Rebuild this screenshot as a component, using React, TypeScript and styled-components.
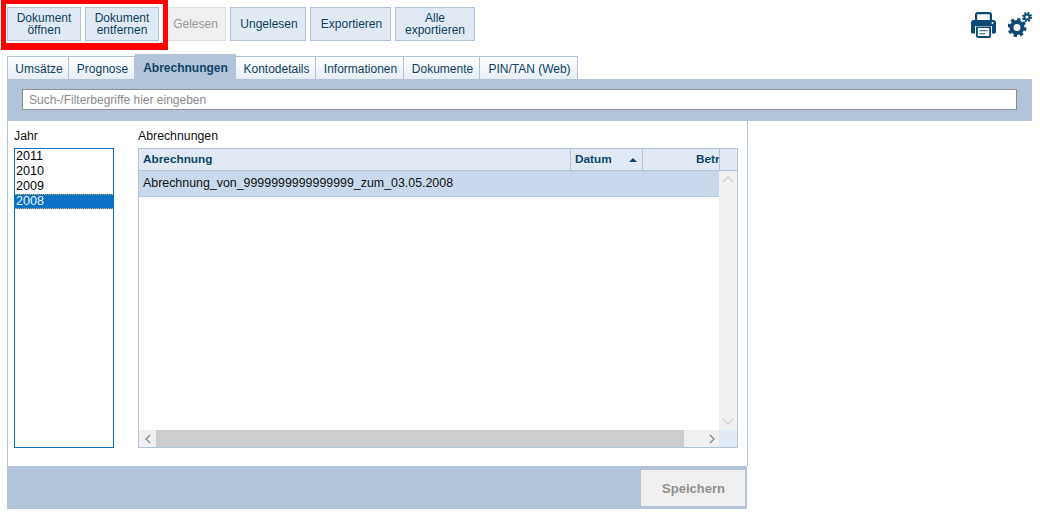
import React from "react";
import styled, { createGlobalStyle } from "styled-components";

const Global = createGlobalStyle`
  html, body { margin: 0; padding: 0; background: #fff; overflow: hidden; }
  body { font-family: "Liberation Sans", Arial, sans-serif; font-size: 12px; color: #000; }
  * { box-sizing: border-box; }
`;

const Page = styled.div`
  position: relative;
  width: 1040px;
  height: 512px;
  padding: 7px 8px 0 7px;
  overflow: hidden;
`;

const Toolbar = styled.div`
  display: flex;
  align-items: flex-start;
  gap: 4px;
  height: 47px;
`;

const ToolButton = styled.div<{ $w: number; $disabled?: boolean; $pad?: number }>`
  width: ${(p) => p.$w}px;
  height: 34px;
  display: flex;
  align-items: center;
  justify-content: center;
  text-align: center;
  padding-left: ${(p) => p.$pad ?? 0}px;
  line-height: 12px;
  font-size: 12px;
  color: ${(p) => (p.$disabled ? "#999" : "#0f3f60")};
  background: ${(p) => (p.$disabled ? "#efefef" : "#e1eaf4")};
  border: 1px solid ${(p) => (p.$disabled ? "#e0e0e0" : "#b3c4d9")};
`;

const Highlight = styled.div`
  position: absolute;
  left: 1px;
  top: -1px;
  width: 167px;
  height: 51px;
  border: 5px solid #f00;
  border-bottom-width: 7px;
  pointer-events: none;
`;

const Icons = styled.div`
  margin-left: auto;
  display: flex;
  gap: 12px;
  padding-top: 5px;
`;

const TabBar = styled.div`
  display: flex;
  align-items: flex-end;
  height: 25px;
`;

const Tab = styled.div<{ $w: number; $active?: boolean }>`
  width: ${(p) => p.$w}px;
  height: ${(p) => (p.$active ? 25 : 23)}px;
  display: flex;
  align-items: center;
  justify-content: center;
  padding-top: 1px;
  padding-left: ${(p) => (p.$active ? 0 : 2)}px;
  font-size: 12px;
  font-weight: ${(p) => (p.$active ? 700 : 400)};
  color: ${(p) => (p.$active ? "#0f4468" : "#0f3f60")};
  background: ${(p) => (p.$active ? "#b3c4d9" : "linear-gradient(#fff, #e6edf5)")};
  border: 1px solid #b3c4d9;
  border-bottom: none;
  border-left-width: ${(p) => (p.$active ? 1 : 0)}px;
  &:first-child { border-left-width: 1px; }
`;

const FilterBand = styled.div`
  width: 1025px;
  height: 42px;
  padding: 10px 15px 0;
  background: #b3c4d9;
`;

const FilterInput = styled.div`
  height: 21px;
  padding-left: 6px;
  display: flex;
  align-items: center;
  background: #fff;
  border: 1px solid #8f8f8f;
  color: #8a8a8a;
  font-size: 12px;
`;

const Panel = styled.div`
  width: 741px;
  height: 345px;
  padding: 7px 9px 0 6px;
  background: #fff;
  border-left: 1px solid #b3c4d9;
  border-right: 1px solid #b3c4d9;
  display: grid;
  grid-template-columns: 100px 600px;
  column-gap: 24px;
  align-items: start;
`;

const Column = styled.div`
  display: flex;
  flex-direction: column;
`;

const Label = styled.div`
  height: 20px;
  padding-top: 2px;
  line-height: 13px;
  font-size: 12.3px;
  color: #111;
`;

const YearList = styled.div`
  height: 300px;
  border: 1px solid #0a72c4;
`;

const Year = styled.div<{ $selected?: boolean }>`
  height: 15px;
  line-height: 12px;
  padding-left: 1px;
  font-size: 12.6px;
  color: ${(p) => (p.$selected ? "#e8f2fb" : "#000")};
  background: ${(p) => (p.$selected ? "#0a72c4" : "#fff")};
  border-top: 1px ${(p) => (p.$selected ? "dotted #c9a86a" : "solid #fff")};
  border-bottom: 1px ${(p) => (p.$selected ? "dotted #c9a86a" : "solid #fff")};
`;

const Table = styled.div`
  height: 300px;
  border: 1px solid #b3c4d9;
  display: grid;
  grid-template-columns: 580px 18px;
  grid-template-rows: 22px 259px 17px;
`;

const Head = styled.div`
  display: flex;
  background: #e1eaf4;
  border-bottom: 1px solid #b3c4d9;
`;

const HeadCell = styled.div<{ $w: number; $pad?: number }>`
  position: relative;
  width: ${(p) => p.$w}px;
  padding-left: ${(p) => p.$pad ?? 4}px;
  line-height: 21px;
  font-size: 11.8px;
  font-weight: 700;
  color: #0f4468;
  white-space: nowrap;
  overflow: hidden;
  border-right: 1px solid #b3c4d9;
  &:last-child { border-right: none; }
`;

const SortMark = styled.span`
  position: absolute;
  right: 5px;
  top: 9px;
  width: 0;
  height: 0;
  border-left: 4px solid transparent;
  border-right: 4px solid transparent;
  border-bottom: 4px solid #0f4468;
`;

const Corner = styled.div`
  background: #e1eaf4;
  border-left: 1px solid #b3c4d9;
  border-bottom: 1px solid #b3c4d9;
`;

const Body = styled.div`
  background: #fff;
`;

const Row = styled.div`
  height: 26px;
  padding-left: 4px;
  line-height: 25px;
  font-size: 12.4px;
  color: #111;
  background: #c9d9eb;
  border-bottom: 1px solid #b9cbe0;
  white-space: nowrap;
`;

const VScroll = styled.div`
  background: #f0f0f0;
  display: flex;
  flex-direction: column;
  justify-content: space-between;
  align-items: center;
  padding: 4px 0;
`;

const HScroll = styled.div`
  background: #f0f0f0;
  display: flex;
  align-items: center;
`;

const ArrowBox = styled.div`
  width: 17px;
  height: 17px;
  display: flex;
  align-items: center;
  justify-content: center;
  flex: none;
`;

const Thumb = styled.div`
  width: 528px;
  height: 17px;
  flex: none;
  background: #cdcdcd;
`;

const ScrollEnd = styled.div`
  margin-left: auto;
  width: 34px;
  height: 17px;
  display: flex;
  align-items: center;
  justify-content: center;
  padding-left: 20px;
`;

const CornerEnd = styled.div`
  background: #e1eaf4;
`;

const Footer = styled.div`
  width: 740px;
  height: 43px;
  padding: 4px 2px 0 0;
  background: #b3c4d9;
  display: flex;
  justify-content: flex-end;
`;

const SaveButton = styled.div`
  width: 104px;
  height: 36px;
  display: flex;
  align-items: center;
  justify-content: center;
  padding-left: 1px;
  background: #efefef;
  color: #8f8f8f;
  font-size: 13px;
  font-weight: 700;
`;

const Chevron = ({ d, c = "#d0d0d0" }: { d: string; c?: string }) => (
  <svg width="12" height="10" viewBox="0 0 12 10" fill="none" stroke={c} strokeWidth="1.3">
    <path d={d} />
  </svg>
);

const PrinterIcon = () => (
  <svg width="25" height="26" viewBox="0 0 25 26" fill="#0b4a75">
    <path d="M4 10V2.500C4 1.100 5.100 0 6.500 0h12C19.900 0 21 1.100 21 2.500V10h-2.200V2.200H6.200V10z" />
    <path d="M2.500 8h20C23.900 8 25 9.100 25 10.500V20c0 .800-.700 1.500-1.500 1.500H21V14H4v7.500H1.500C.700 21.500 0 20.800 0 20v-9.500C0 9.100 1.100 8 2.500 8z" />
    <circle cx="21.500" cy="11" r="1" fill="#fff" />
    <path d="M5 14.500h15V24c0 1.100-.900 2-2 2H7c-1.100 0-2-.900-2-2z" />
    <path d="M6.800 16h11.400v8H6.800z" fill="#fff" />
    <path d="M8.500 18h8v1.300h-8zM8.500 21h5.500v1.300H8.500z" fill="#3f7aa5" />
  </svg>
);

const GearIcon = () => (
  <svg width="24" height="25" viewBox="0 0 24 25" fill="none" stroke="#0b4a75">
    <circle cx="9" cy="15.500" r="5.500" strokeWidth="4" />
    <circle cx="9" cy="15.500" r="8" strokeWidth="3.200" strokeDasharray="3.200 3.080" />
    <circle cx="19" cy="5" r="2.600" strokeWidth="2" />
    <circle cx="19" cy="5" r="4.200" strokeWidth="1.800" strokeDasharray="1.900 1.400" />
  </svg>
);

export default function App() {
  return (
    <Page>
      <Global />
      <Toolbar>
        <ToolButton $w={74}>Dokument<br />öffnen</ToolButton>
        <ToolButton $w={74}>Dokument<br />entfernen</ToolButton>
        <ToolButton $w={63} $disabled $pad={2}>Gelesen</ToolButton>
        <ToolButton $w={76} $pad={2}>Ungelesen</ToolButton>
        <ToolButton $w={81} $pad={2}>Exportieren</ToolButton>
        <ToolButton $w={80}>Alle<br />exportieren</ToolButton>
        <Icons>
          <PrinterIcon />
          <GearIcon />
        </Icons>
      </Toolbar>
      <Highlight />
      <TabBar>
        <Tab $w={62}>Umsätze</Tab>
        <Tab $w={66}>Prognose</Tab>
        <Tab $w={101} $active>Abrechnungen</Tab>
        <Tab $w={80}>Kontodetails</Tab>
        <Tab $w={88}>Informationen</Tab>
        <Tab $w={76}>Dokumente</Tab>
        <Tab $w={98}>PIN/TAN (Web)</Tab>
      </TabBar>
      <FilterBand>
        <FilterInput>Such-/Filterbegriffe hier eingeben</FilterInput>
      </FilterBand>
      <Panel>
        <Column>
          <Label>Jahr</Label>
          <YearList>
            <Year>2011</Year>
            <Year>2010</Year>
            <Year>2009</Year>
            <Year $selected>2008</Year>
          </YearList>
        </Column>
        <Column>
          <Label>Abrechnungen</Label>
          <Table>
            <Head>
              <HeadCell $w={432}>Abrechnung</HeadCell>
              <HeadCell $w={72}>Datum<SortMark /></HeadCell>
              <HeadCell $w={76} $pad={53}>Betrag</HeadCell>
            </Head>
            <Corner />
            <Body>
              <Row>Abrechnung_von_9999999999999999_zum_03.05.2008</Row>
            </Body>
            <VScroll>
              <Chevron d="M1 7l5-5 5 5" />
              <Chevron d="M1 3l5 5 5-5" />
            </VScroll>
            <HScroll>
              <ArrowBox><Chevron d="M8 1L4 5l4 4" c="#888" /></ArrowBox>
              <Thumb />
              <ScrollEnd><Chevron d="M4 1l4 4-4 4" c="#888" /></ScrollEnd>
            </HScroll>
            <CornerEnd />
          </Table>
        </Column>
      </Panel>
      <Footer>
        <SaveButton>Speichern</SaveButton>
      </Footer>
    </Page>
  );
}
